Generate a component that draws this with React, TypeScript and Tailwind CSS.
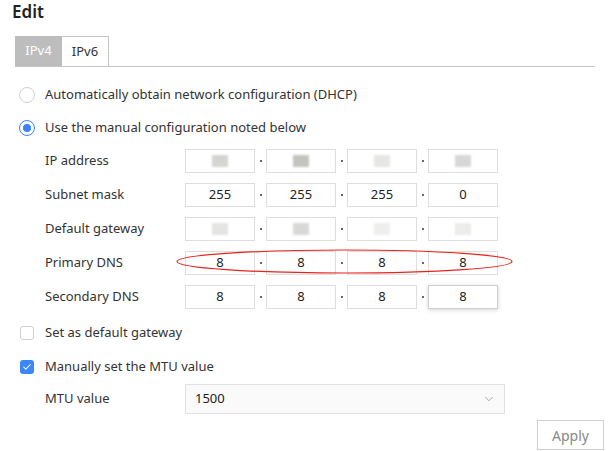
import React from 'react';
import { ChevronDown, Check } from 'lucide-react';

type Cell = string | null;

const Blur: React.FC<{ shade: string }> = ({ shade }) => (
  <div className="flex items-center justify-center">
    <div className={`w-[16px] h-[12px] ${shade} blur-[1px]`} />
  </div>
);

const IpBox: React.FC<{ value: Cell; shade?: string; focused?: boolean }> = ({ value, shade, focused }) => (
  <div
    className={`w-[70px] h-[24px] border flex items-center justify-center text-[13px] text-[#222] ${
      focused ? 'border-[#d0d0d0] shadow-[0_1px_4px_rgba(0,0,0,0.18)]' : 'border-[#dedede]'
    }`}
  >
    {value !== null ? value : <Blur shade={shade || 'bg-gray-300'} />}
  </div>
);

const Dot = () => (
  <div className="w-[11px] flex justify-center">
    <div className="w-[2px] h-[2px] bg-[#666]" />
  </div>
);

const IpRow: React.FC<{ label: string; cells: Cell[]; shades?: string[]; focusLast?: boolean }> = ({
  label,
  cells,
  shades,
  focusLast,
}) => (
  <div className="h-[34px] flex items-center">
    <div className="w-[185px] shrink-0 pl-[45px] whitespace-nowrap">{label}</div>
    <div className="flex items-center">
      {cells.map((c, i) => (
        <React.Fragment key={i}>
          {i > 0 && <Dot />}
          <IpBox value={c} shade={shades ? shades[i] : undefined} focused={focusLast && i === 3} />
        </React.Fragment>
      ))}
    </div>
  </div>
);

const App: React.FC = () => {
  return (
    <div className="relative w-[609px] h-[451px] bg-white overflow-hidden font-['Noto_Sans',sans-serif] text-[13px] text-[#333]">
      <div className="h-[26px] pl-[12px] text-[17px] font-semibold text-[#222] leading-[24px]">Edit</div>

      <div className="mt-[10px] ml-[15px] mr-[14px] flex border-b border-[#c4c4c4] h-[31px]">
        <div className="w-[47px] h-[30px] bg-[#bdbdbd] text-white flex items-center justify-center">IPv4</div>
        <div className="w-[47px] h-[30px] border-t border-r border-[#c4c4c4] flex items-center justify-center text-[#333]">
          IPv6
        </div>
      </div>

      <div className="mt-[11px]">
        <div className="h-[34px] flex items-center">
          <div className="ml-[19px] w-[16px] h-[16px] rounded-full border border-[#cfcfcf]" />
          <span className="ml-[10px]">Automatically obtain network configuration (DHCP)</span>
        </div>
        <div className="h-[32px] flex items-center">
          <div className="ml-[19px] w-[16px] h-[16px] rounded-full border border-[#3b82f6] flex items-center justify-center">
            <div className="w-[8px] h-[8px] rounded-full bg-[#3b82f6]" />
          </div>
          <span className="ml-[10px]">Use the manual configuration noted below</span>
        </div>

        <IpRow label="IP address" cells={[null, null, null, null]} shades={['bg-[#d4d4d0]', 'bg-[#c4c4bf]', 'bg-[#e6e6e4]', 'bg-[#d6d8d6]']} />
        <IpRow label="Subnet mask" cells={['255', '255', '255', '0']} />
        <IpRow label="Default gateway" cells={[null, null, null, null]} shades={['bg-[#e4e4e2]', 'bg-[#d8d8d6]', 'bg-[#eeeeec]', 'bg-[#ececea]']} />
        <IpRow label="Primary DNS" cells={['8', '8', '8', '8']} />
        <IpRow label="Secondary DNS" cells={['8', '8', '8', '8']} focusLast />

        <div className="mt-[2px] h-[34px] flex items-center">
          <div className="ml-[20px] w-[14px] h-[14px] rounded-[3px] border border-[#cfcfcf]" />
          <span className="ml-[11px]">Set as default gateway</span>
        </div>
        <div className="h-[34px] flex items-center">
          <div className="ml-[20px] w-[14px] h-[14px] rounded-[3px] bg-[#3b87f5] flex items-center justify-center">
            <Check className="w-[10px] h-[10px] text-white" strokeWidth={2.5} />
          </div>
          <span className="ml-[11px]">Manually set the MTU value</span>
        </div>
        <div className="h-[30px] flex items-center">
          <div className="w-[185px] shrink-0 pl-[45px]">MTU value</div>
          <div className="w-[320px] h-[30px] border border-[#e2e2e2] bg-[#fafafa] flex items-center justify-between pl-[9px] pr-[8px] text-[#222]">
            <span>1500</span>
            <ChevronDown className="w-[14px] h-[14px] text-[#888]" strokeWidth={1.25} />
          </div>
        </div>
        <div className="mt-[6px] flex justify-end pr-[5px]">
          <div className="w-[67px] h-[30px] border border-[#cfcfcf] flex items-center justify-center text-[#888] text-[14px]">
            Apply
          </div>
        </div>
      </div>

      <svg className="absolute left-0 top-0 pointer-events-none" width="609" height="451">
        <ellipse cx="344.5" cy="261.5" rx="167.5" ry="11.5" fill="none" stroke="#e8231f" strokeWidth="1.2" />
      </svg>
    </div>
  );
};

export default App;
